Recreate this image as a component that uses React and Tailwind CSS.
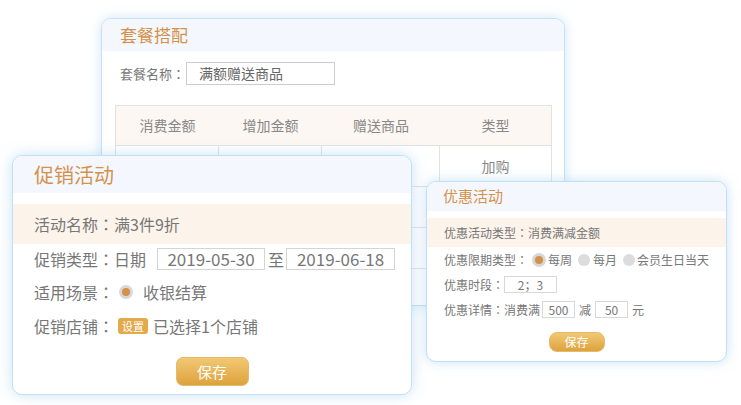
// colon drawn with the TC face so it sits centred, like the reference
function Colon() {
  return <span className="font-['Noto_Sans_CJK_TC',sans-serif]">：</span>;
}

function Radio({ on }) {
  return on ? (
    <span className="inline-block w-[14px] h-[14px] rounded-full bg-[#d8d8d8] p-[3px]">
      <span className="block w-full h-full rounded-full bg-[#d4914b]" />
    </span>
  ) : (
    <span className="inline-block w-[12px] h-[12px] rounded-full bg-[#dcdcdc]" />
  );
}

function SaveButton({ small }) {
  return (
    <button
      className={
        small
          ? "w-[56px] h-[20px] rounded-[8px] bg-gradient-to-b from-[#f2c873] to-[#dda23c] border border-[#e5bb6a] text-white text-[12px] leading-none"
          : "w-[73px] h-[29px] rounded-[7px] bg-gradient-to-b from-[#f2c873] to-[#dda23c] border border-[#e5bb6a] text-white text-[15px] leading-none"
      }
    >
      保存
    </button>
  );
}

function PackageCard() {
  const heads = ["消费金额", "增加金额", "赠送商品", "类型"];
  const widths = ["w-[103px]", "w-[103px]", "w-[118px]", "flex-1"];
  return (
    <div className="absolute left-[101px] top-[18px] w-[464px] h-[288px] rounded-[10px] border border-[#c3e2f8] bg-white shadow-[0_0_12px_rgba(150,200,235,0.45)] overflow-hidden">
      <div className="h-[32px] bg-[#f4f8fe] pl-[18px] flex items-center text-[17px] text-[#d4914b]">
        套餐搭配
      </div>
      <div className="flex items-center pl-[18px] mt-[11px] text-[13px] text-[#777]">
        <span>
          套餐名称
          <Colon />
        </span>
        <div className="ml-[1px] w-[149px] h-[23px] border border-[#ccc] pl-[12px] flex items-center text-[14px] text-[#666]">
          满额赠送商品
        </div>
      </div>
      <div className="ml-[13px] mt-[20px] w-[437px] border border-[#e2e2e2] text-[14px] text-[#888]">
        <div className="flex h-[39px] bg-[#fcf7f2]">
          {heads.map((h, i) => (
            <div key={h} className={`${widths[i]} flex items-center justify-center`}>
              {h}
            </div>
          ))}
        </div>
        {[0, 1, 2, 3].map((r) => (
          <div key={r} className="flex h-[41px] border-t border-[#e2e2e2] first:border-t-0">
            {heads.map((h, i) => (
              <div
                key={h}
                className={`${widths[i]} flex items-center justify-center ${i < 3 ? "border-r border-[#e2e2e2]" : ""}`}
              >
                {r === 0 && i === 3 ? "加购" : ""}
              </div>
            ))}
          </div>
        ))}
      </div>
    </div>
  );
}

function PromoCard() {
  return (
    <div className="absolute left-[12px] top-[155px] w-[400px] h-[240px] rounded-[10px] border border-[#bfe0f7] bg-white shadow-[0_0_14px_rgba(150,200,235,0.5)] overflow-hidden">
      <div className="h-[37px] bg-[#f4f8fe] pl-[21px] flex items-center text-[20px] text-[#d4914b]">
        促销活动
      </div>
      <div className="mt-[11px] h-[40px] bg-[#fcf3ea] pl-[21px] flex items-center text-[16px] text-[#777]">
        活动名称<Colon />满3件9折
      </div>
      <div className="pl-[21px] text-[16px] text-[#777]">
        <div className="mt-[4px] h-[22px] flex items-center">
          <span>
            促销类型<Colon />日期
          </span>
          <div className="ml-[11px] w-[108px] h-[22px] border border-[#d4d4d4] flex items-center justify-center text-[17px] text-[#777]">
            2019-05-30
          </div>
          <span className="ml-[3px] mr-[2px]">至</span>
          <div className="w-[109px] h-[22px] border border-[#d4d4d4] flex items-center justify-center text-[17px] text-[#777]">
            2019-06-18
          </div>
        </div>
        <div className="mt-[11px] h-[22px] flex items-center">
          <span>
            适用场景<Colon />
          </span>
          <span className="ml-[5px] flex">
            <Radio on />
          </span>
          <span className="ml-[10px]">收银结算</span>
        </div>
        <div className="mt-[12px] h-[22px] flex items-center">
          <span>
            促销店铺<Colon />
          </span>
          <span className="ml-[4px] w-[30px] h-[16px] rounded-[3px] bg-[#e3a94a] text-white text-[11px] flex items-center justify-center">
            设置
          </span>
          <span className="ml-[5px]">已选择1个店铺</span>
        </div>
      </div>
      <div className="mt-[20px] flex justify-center">
        <SaveButton />
      </div>
    </div>
  );
}

function DiscountCard() {
  return (
    <div className="absolute left-[426px] top-[181px] w-[301px] h-[181px] rounded-[10px] border border-[#bfe0f7] bg-white shadow-[0_0_12px_rgba(150,200,235,0.5)] overflow-hidden">
      <div className="h-[29px] bg-[#f4f8fe] pl-[16px] flex items-center text-[15px] text-[#d4914b]">
        优惠活动
      </div>
      <div className="mt-[7px] h-[29px] bg-[#fcf3ea] pl-[17px] flex items-center text-[12px] text-[#777]">
        优惠活动类型<Colon />消费满减金额
      </div>
      <div className="pl-[17px] text-[12px] text-[#777]">
        <div className="mt-[4px] h-[17px] flex items-center">
          <span>
            优惠限期类型<Colon />
          </span>
          <span className="ml-[4px] flex">
            <Radio on />
          </span>
          <span className="ml-[2px]">每周</span>
          <span className="ml-[6px] flex">
            <Radio />
          </span>
          <span className="ml-[3px]">每月</span>
          <span className="ml-[6px] flex">
            <Radio />
          </span>
          <span className="ml-[2px]">会员生日当天</span>
        </div>
        <div className="mt-[8px] h-[17px] flex items-center">
          <span>
            优惠时段<Colon />
          </span>
          <div className="w-[53px] h-[17px] border border-[#d8d8d8] flex items-center justify-center">
            2；3
          </div>
        </div>
        <div className="mt-[8px] h-[17px] flex items-center">
          <span>
            优惠详情<Colon />消费满
          </span>
          <div className="ml-[2px] w-[33px] h-[17px] border border-[#d8d8d8] flex items-center justify-center">
            500
          </div>
          <span className="mx-[4px]">减</span>
          <div className="w-[33px] h-[17px] border border-[#d8d8d8] flex items-center justify-center">
            50
          </div>
          <span className="ml-[4px]">元</span>
        </div>
      </div>
      <div className="mt-[14px] flex justify-center">
        <SaveButton small />
      </div>
    </div>
  );
}

export default function App() {
  return (
    <div className="relative w-[741px] h-[405px] bg-white overflow-hidden font-['Noto_Sans_CJK_SC','Liberation_Sans',sans-serif]">
      <PackageCard />
      <PromoCard />
      <DiscountCard />
    </div>
  );
}
